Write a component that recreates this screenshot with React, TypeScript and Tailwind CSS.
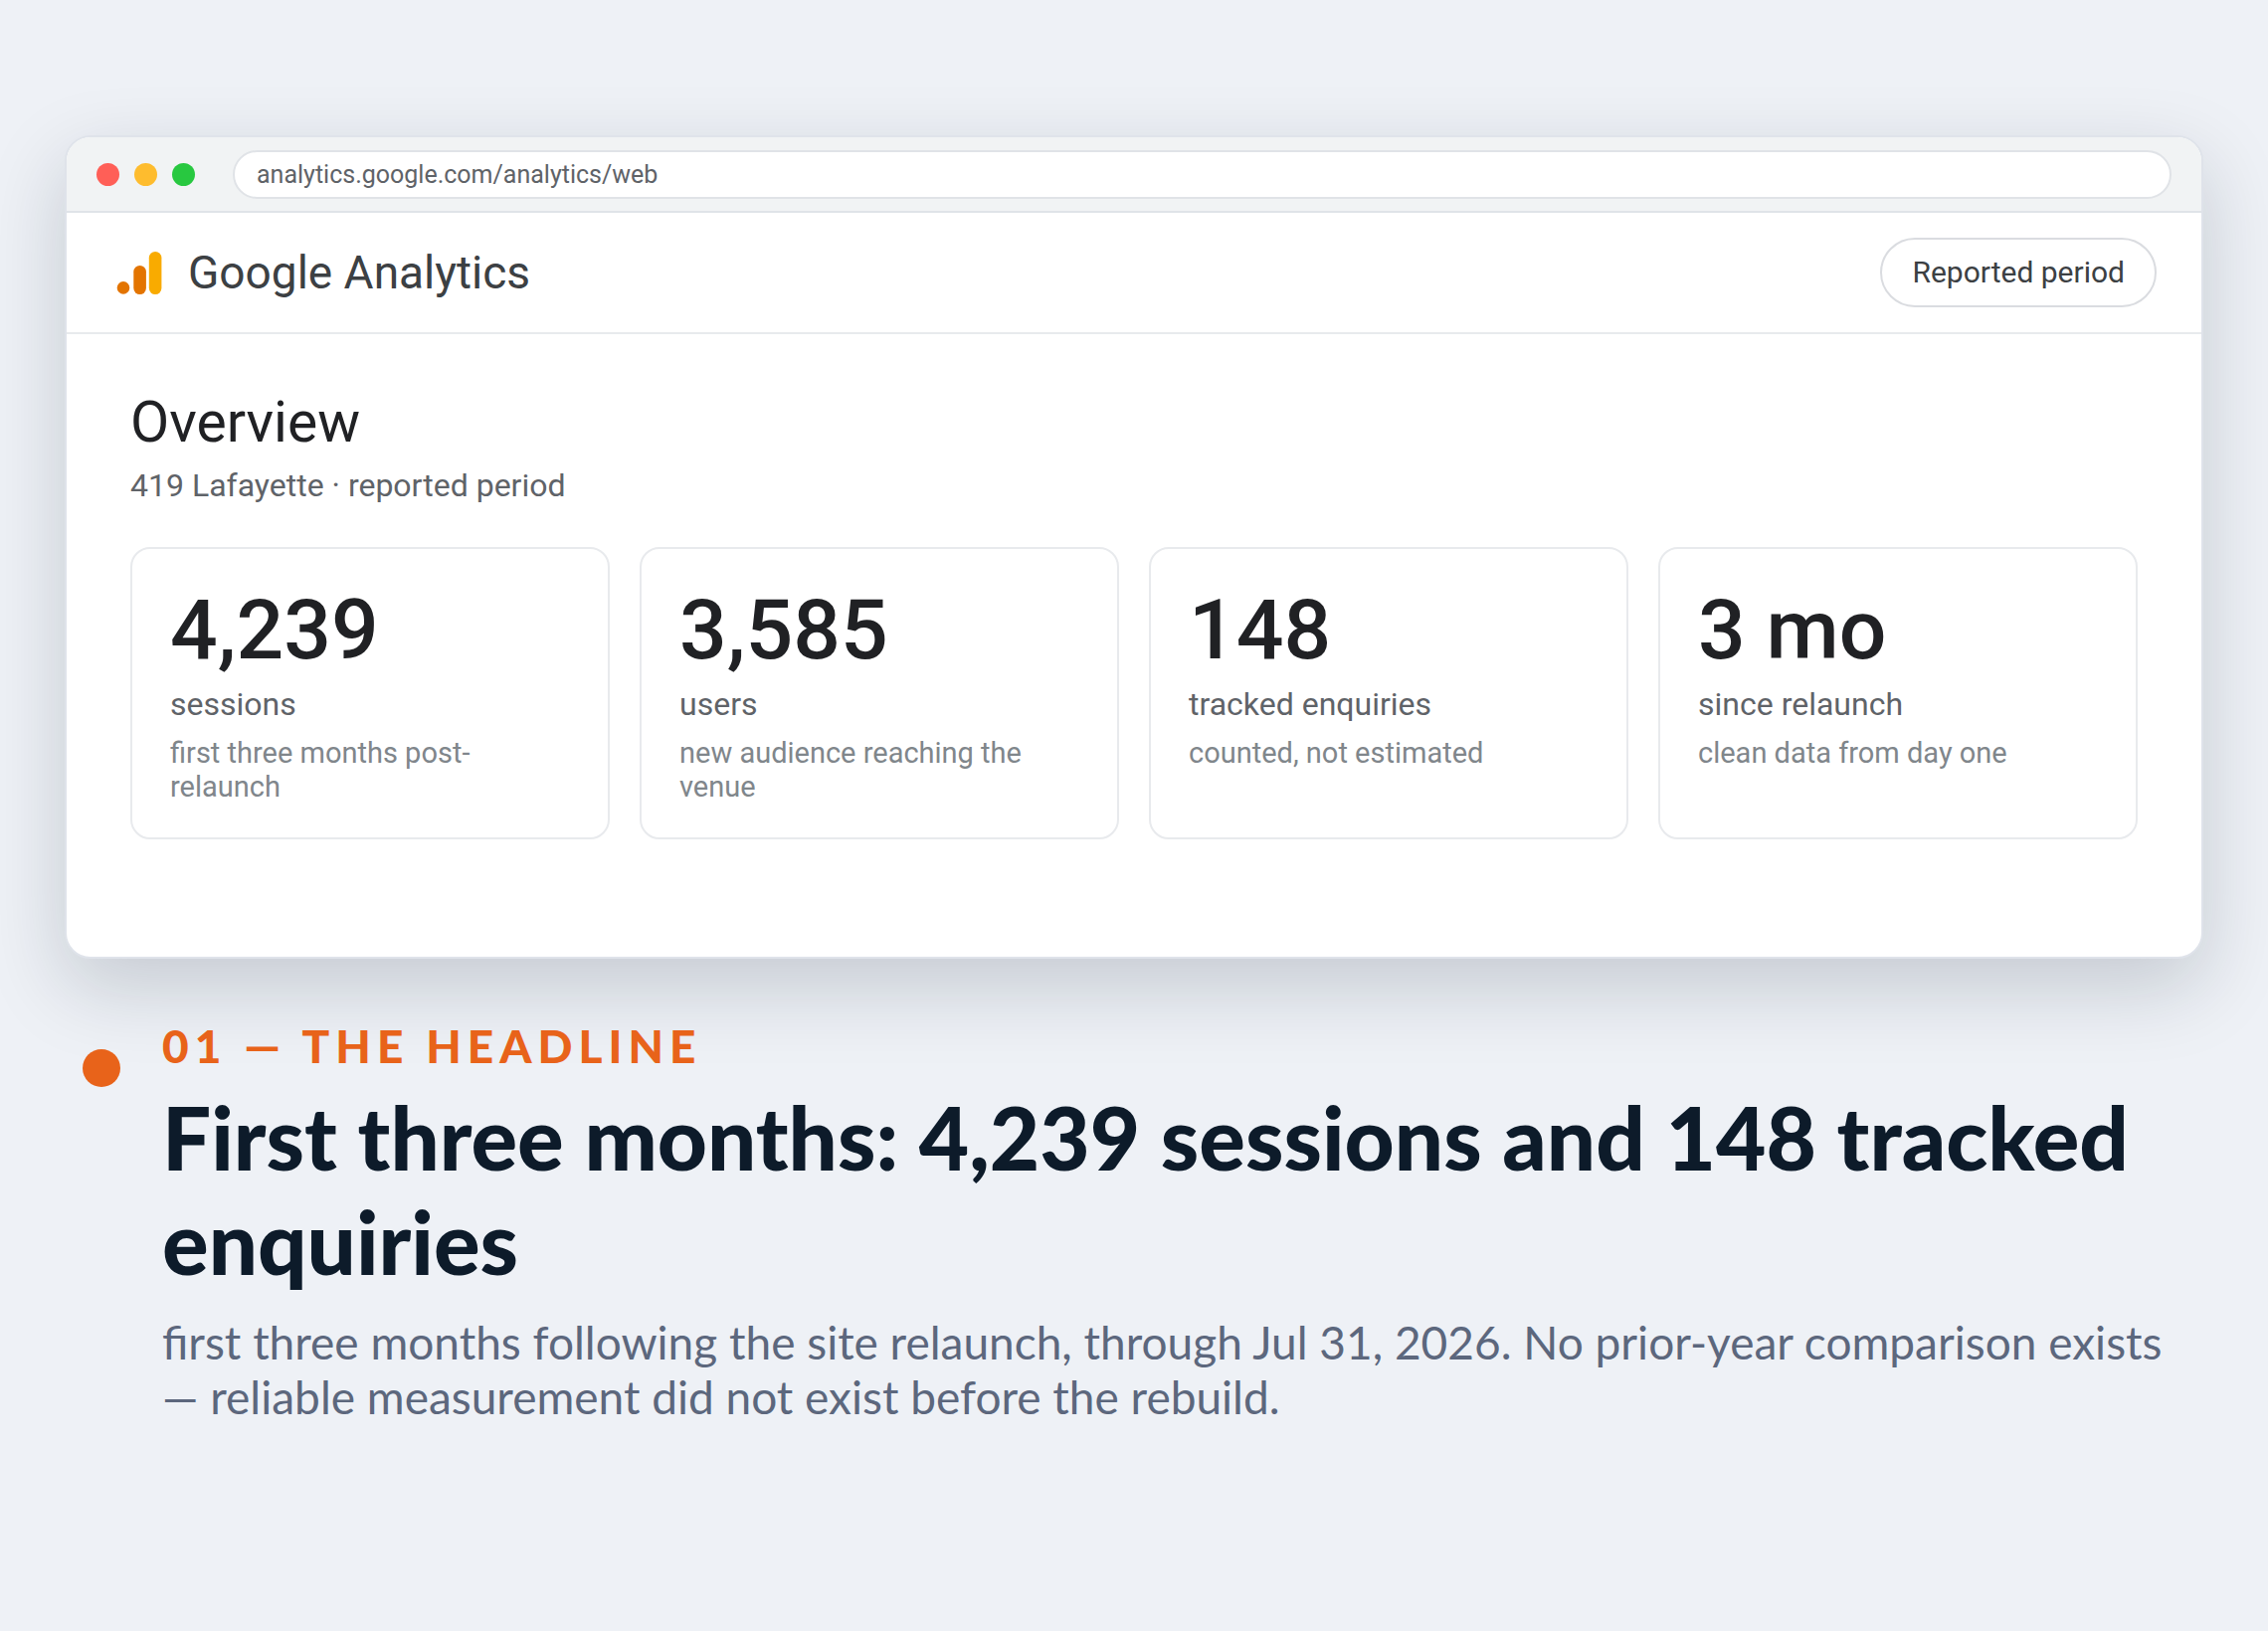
import React from "react"

interface Stat {
  value: string
  label: string
  note: string
}

const stats: Stat[] = [
  { value: "4,239", label: "sessions", note: "first three months post-relaunch" },
  { value: "3,585", label: "users", note: "new audience reaching the venue" },
  { value: "148", label: "tracked enquiries", note: "counted, not estimated" },
  { value: "3 mo", label: "since relaunch", note: "clean data from day one" },
]

function AnalyticsLogo() {
  return (
    <svg className="w-[46px] h-[44px]" viewBox="0 0 46 44" aria-hidden="true">
      <circle cx="7" cy="37.4" r="6.3" fill="#e37400" />
      <rect x="17.3" y="15" width="12.6" height="29" rx="6.3" fill="#e37400" />
      <rect x="32.8" y="1" width="12.6" height="43" rx="6.3" fill="#f9ab00" />
    </svg>
  )
}

function StatCard({ value, label, note }: Stat) {
  return (
    <div className="rounded-[20px] border-2 border-[#e8eaed] px-[38px] py-[34px]">
      <p className="text-[84px] leading-[96px] font-medium text-[#202124]">{value}</p>
      <p className="mt-[7px] text-[32px] leading-[38px] text-[#5f6368]">{label}</p>
      <p className="mt-[13px] text-[29px] leading-[34px] text-[#80868b]">{note}</p>
    </div>
  )
}

export default function App() {
  return (
    <div className="min-h-screen bg-[#eef1f6] px-[65px] pt-[136px] pb-16">
      {/* Browser window */}
      <div className="overflow-hidden rounded-[26px] border-2 border-[#dfe3ea] bg-white font-[Roboto,sans-serif] shadow-[0_28px_80px_rgba(13,27,42,0.18)]">
        <div className="flex items-center gap-[38px] border-b-2 border-[#dfe3e8] bg-[#f1f3f4] px-[30px] pt-[13px] pb-3">
          <div className="flex gap-[15px]">
            <span className="h-[23px] w-[23px] rounded-full bg-[#ff5f57]" />
            <span className="h-[23px] w-[23px] rounded-full bg-[#febc2e]" />
            <span className="h-[23px] w-[23px] rounded-full bg-[#28c840]" />
          </div>
          <input
            type="text"
            aria-label="Address"
            readOnly
            value="analytics.google.com/analytics/web"
            className="h-[49px] min-w-0 flex-1 rounded-full border-2 border-[#e0e3e7] bg-white px-[22px] text-[25px] text-[#5f6368] outline-none"
          />
        </div>

        <header className="flex items-center justify-between border-b-2 border-[#e8eaed] pr-[45px] pl-[50px] py-[25px]">
          <div className="flex items-center gap-[26px]">
            <AnalyticsLogo />
            <span className="text-[46px] leading-[54px] text-[#3c4043]">Google Analytics</span>
          </div>
          <button
            type="button"
            className="h-[70px] rounded-full border-2 border-[#dadce0] px-[30px] text-[30px] leading-[36px] text-[#3c4043]"
          >
            Reported period
          </button>
        </header>

        <main className="px-[64px] pt-[56px] pb-[118px]">
          <h1 className="text-[57px] leading-[66px] text-[#202124]">Overview</h1>
          <p className="mt-[11px] text-[32px] leading-[38px] text-[#5f6368]">419 Lafayette · reported period</p>
          <div className="mt-[43px] grid grid-cols-4 gap-[30px]">
            {stats.map((stat) => (
              <StatCard key={stat.label} {...stat} />
            ))}
          </div>
        </main>
      </div>

      {/* Caption */}
      <section className="mt-[60px] flex items-start gap-[42px] pr-8 pl-[18px] font-[Lato,sans-serif]">
        <span className="mt-[31px] h-[38px] w-[38px] shrink-0 rounded-full bg-[#e8631a]" />
        <div>
          <p className="text-[46px] leading-[56px] font-black tracking-[6px] text-[#e8631a]">01 — THE HEADLINE</p>
          <h2 className="mt-[11px] text-[87px] leading-[105px] font-black text-[#0d1b2a]">
            First three months: 4,239 sessions and 148 tracked enquiries
          </h2>
          <p className="mt-[21px] text-[46px] leading-[55px] text-[#5c677d]">
            first three months following the site relaunch, through Jul 31, 2026. No prior-year comparison exists —
            reliable measurement did not exist before the rebuild.
          </p>
        </div>
      </section>
    </div>
  )
}
